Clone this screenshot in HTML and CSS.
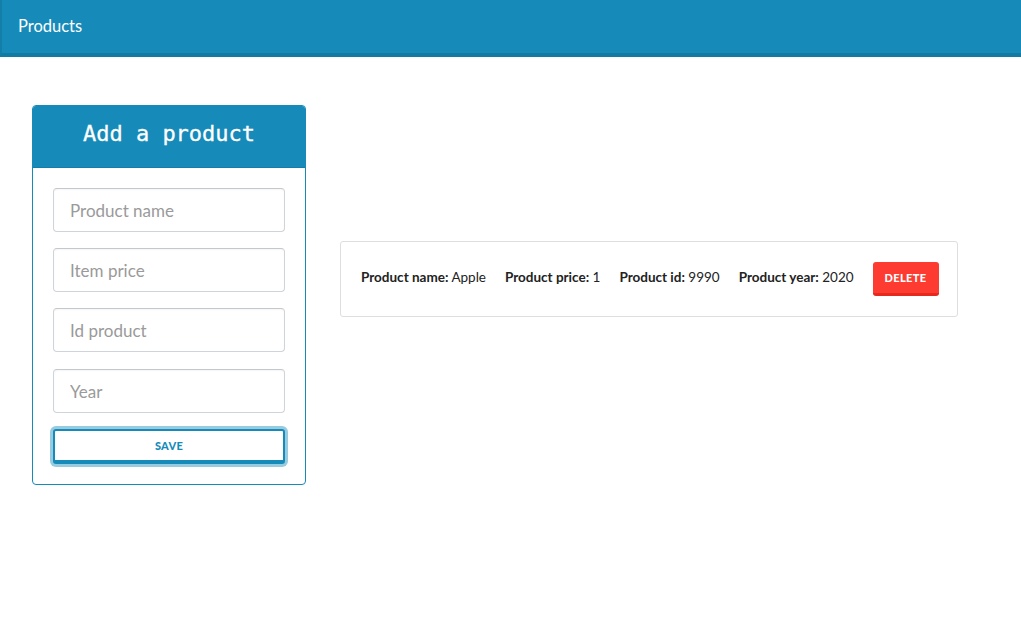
FILE: index.html
```html
<!DOCTYPE html>
<html>
<head>
<meta charset="utf-8">
<link rel="stylesheet" href="styles.css">
</head>
<body>
<nav class="navbar"><span class="brand">Products</span></nav>
<main class="content">
  <section class="form-card">
    <header class="form-head"><h1>Add a product</h1></header>
    <form class="form-body">
      <input class="field" placeholder="Product name">
      <input class="field" placeholder="Item price">
      <input class="field" placeholder="Id product">
      <input class="field" placeholder="Year">
      <button type="button" class="save">SAVE</button>
    </form>
  </section>
  <section class="list">
    <div class="item">
      <span class="prop"><b>Product name:</b> Apple</span>
      <span class="prop"><b>Product price:</b> 1</span>
      <span class="prop"><b>Product id:</b> 9990</span>
      <span class="prop"><b>Product year:</b> 2020</span>
      <button type="button" class="delete">DELETE</button>
    </div>
  </section>
</main>
</body>
</html>
```
FILE: styles.css
```css
* { box-sizing: border-box; }
body {
  margin: 0;
  font-family: "Source Sans Pro", Lato, "Noto Sans", sans-serif;
  color: #222;
  background: #fff;
}
.navbar {
  height: 57px;
  background: #168bba;
  border-bottom: 4px solid #127ba3;
  border-left: 2px solid #137ea8;
  display: flex;
  align-items: center;
  padding-left: 16px;
  padding-bottom: 2px;
}
.brand {
  color: #fff;
  font-size: 16.5px;
}
.content {
  display: flex;
  align-items: flex-start;
  padding: 48px 0 0 32px;
}
.form-card {
  width: 274px;
  border: 1px solid #168bba;
  border-radius: 4px;
  overflow: hidden;
}
.form-head {
  background: #168bba;
  height: 62px;
  display: flex;
  align-items: center;
  justify-content: center;
  border-bottom: 1px solid #137ea8;
}
.form-head h1 {
  margin: 0;
  color: #fff;
  font-family: "DejaVu Sans Mono", "Liberation Mono", monospace;
  font-size: 22px;
  font-weight: normal;
  padding-bottom: 6px;
  -webkit-text-stroke: 0.3px #fff;
}
.form-body {
  display: flex;
  flex-direction: column;
  gap: 16px;
  padding: 20px 20px 20px 20px;
}
.field {
  height: 44px;
  border: 1px solid #ced4da;
  border-top-color: #c3c8cd;
  border-radius: 4px;
  padding: 0 16px;
  font-family: inherit;
  font-size: 17px;
  color: #222;
  box-shadow: inset 0 1px 2px rgba(0,0,0,0.04);
}
.field::placeholder { color: #9a9a9a; }
.field:nth-of-type(4) { margin-top: 1px; }
.save {
  height: 35px;
  background: #fff;
  border: 2px solid #168bba;
  border-bottom-width: 4px;
  border-radius: 3px;
  box-shadow: 0 0 0 3px rgba(22,139,186,0.45);
  color: #168bba;
  font-family: inherit;
  font-weight: 900;
  font-size: 11px;
  letter-spacing: 0.3px;
}
.list {
  margin-left: 34px;
  margin-top: 136px;
  width: 618px;
}
.item {
  border: 1px solid #dedede;
  border-radius: 3px;
  height: 76px;
  display: flex;
  align-items: center;
  padding: 0 20px;
  gap: 19px;
  font-size: 13.5px;
  white-space: nowrap;
}
.prop { padding-bottom: 4px; }
.prop b { font-weight: 700; }
.delete {
  flex: 0 0 66px;
  height: 34px;
  width: 66px;
  background: #fe3b30;
  border: none;
  border-bottom: 3px solid #e6281e;
  border-radius: 3px;
  color: #fff;
  font-family: inherit;
  font-weight: 900;
  font-size: 11px;
  letter-spacing: 0.4px;
}
```
